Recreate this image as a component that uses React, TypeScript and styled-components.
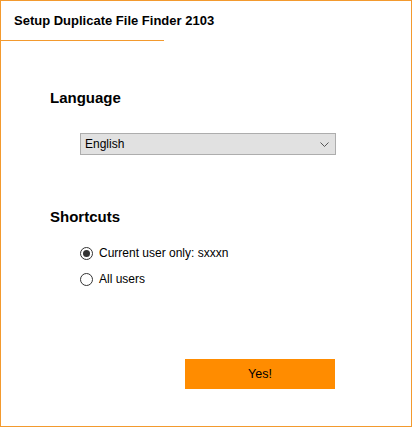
import React, { useState } from 'react';
import styled, { createGlobalStyle } from 'styled-components';

const GlobalStyle = createGlobalStyle`
  html, body {
    margin: 0;
    padding: 0;
    background: #ffffff;
  }
  * {
    box-sizing: border-box;
  }
`;

const FONT = `Tahoma, "Liberation Sans", Arial, sans-serif`;

const Window = styled.div`
  width: 412px;
  height: 427px;
  border: 1px solid #f39a2e;
  background: #ffffff;
  font-family: ${FONT};
  color: #000;
  display: flex;
  flex-direction: column;
`;

const TitleBar = styled.div`
  height: 39px;
  display: flex;
  align-items: center;
  padding-left: 13px;
  font-size: 13px;
  font-weight: bold;
`;

const TitleRule = styled.div`
  width: 164px;
  height: 1px;
  margin-left: -1px;
  background: #f39a2e;
`;

const Content = styled.div`
  flex: 1;
  display: flex;
  flex-direction: column;
  padding: 47px 0 0 49px;
`;

const Heading = styled.h2`
  margin: 0;
  font-size: 15px;
  font-weight: bold;
  line-height: 20px;
`;

const Section = styled.div<{ $gap: number; $after?: number }>`
  display: flex;
  flex-direction: column;
  gap: ${(p) => p.$gap}px;
  margin-bottom: ${(p) => p.$after ?? 0}px;
`;

const Indented = styled.div`
  padding-left: 30px;
  display: flex;
  flex-direction: column;
  gap: 4px;
`;

const SelectBox = styled.div`
  width: 256px;
  height: 22px;
  background: #e1e1e1;
  border: 1px solid #adadad;
  display: flex;
  align-items: center;
  justify-content: space-between;
  padding: 0 6px 0 4px;
  font-size: 12px;
`;

const RadioRow = styled.label`
  display: flex;
  align-items: center;
  gap: 6px;
  height: 22px;
  font-size: 12px;
  cursor: pointer;
`;

const RadioDot = styled.span<{ $checked: boolean }>`
  width: 13px;
  height: 13px;
  border-radius: 50%;
  border: 1px solid #333;
  display: flex;
  align-items: center;
  justify-content: center;

  &::after {
    content: '';
    width: 7px;
    height: 7px;
    border-radius: 50%;
    background: ${(p) => (p.$checked ? '#333' : 'transparent')};
  }
`;

const Footer = styled.div`
  margin-top: auto;
  padding: 0 0 37px 135px;
`;

const YesButton = styled.button`
  width: 150px;
  height: 30px;
  border: none;
  background: #ff8c00;
  font-family: ${FONT};
  font-size: 12.5px;
  color: #000;
  cursor: pointer;
`;

const Chevron = () => (
  <svg width="9" height="5" viewBox="0 0 9 5">
    <path d="M0.5 0.5 L4.5 4.5 L8.5 0.5" fill="none" stroke="#555" strokeWidth="1" />
  </svg>
);

export default function App() {
  const [choice, setChoice] = useState('current');

  return (
    <>
      <GlobalStyle />
      <Window>
        <TitleBar>Setup Duplicate File Finder 2103</TitleBar>
        <TitleRule />
        <Content>
          <Section $gap={25} $after={52}>
            <Heading>Language</Heading>
            <Indented>
              <SelectBox>
                <span>English</span>
                <Chevron />
              </SelectBox>
            </Indented>
          </Section>
          <Section $gap={15}>
            <Heading>Shortcuts</Heading>
            <Indented>
              <RadioRow onClick={() => setChoice('current')}>
                <RadioDot $checked={choice === 'current'} />
                Current user only: sxxxn
              </RadioRow>
              <RadioRow onClick={() => setChoice('all')}>
                <RadioDot $checked={choice === 'all'} />
                All users
              </RadioRow>
            </Indented>
          </Section>
          <Footer>
            <YesButton>Yes!</YesButton>
          </Footer>
        </Content>
      </Window>
    </>
  );
}
